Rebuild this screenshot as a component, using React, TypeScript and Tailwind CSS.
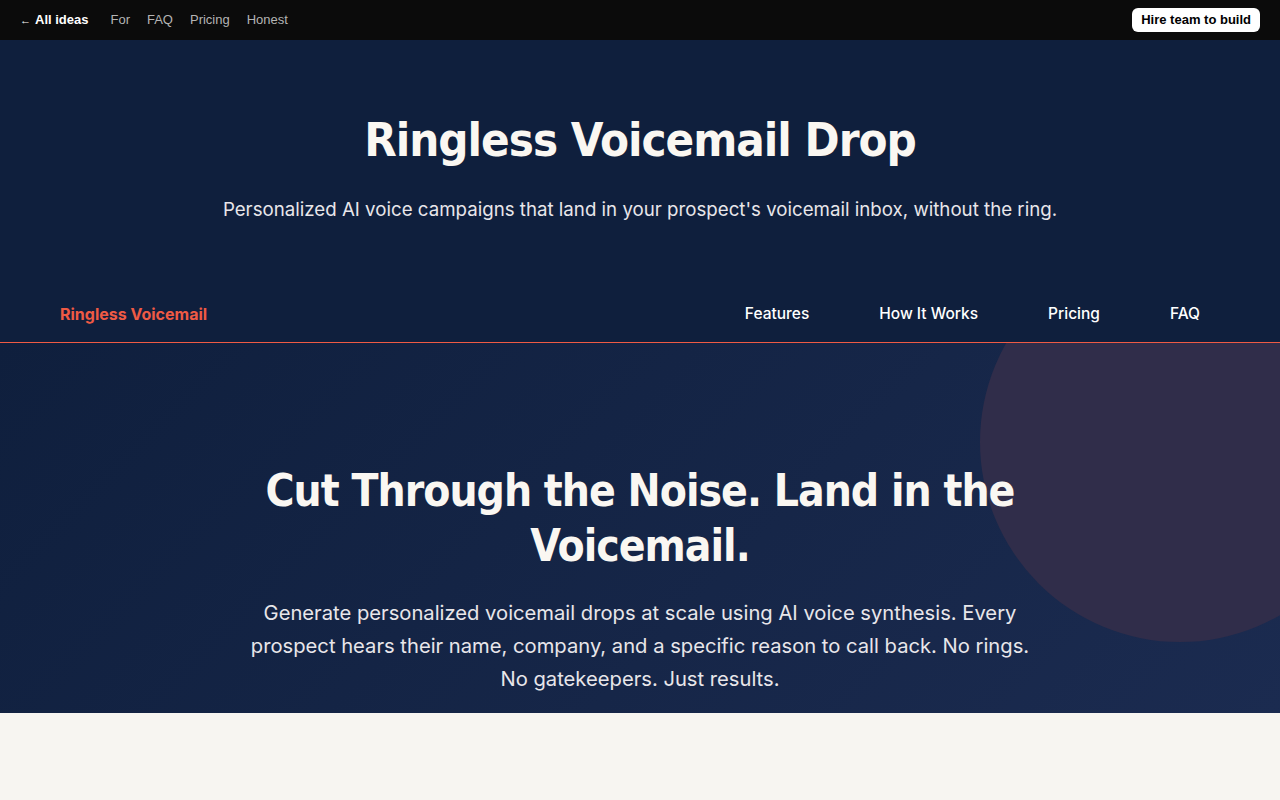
const topLinks = ["For", "FAQ", "Pricing", "Honest"];
const sectionLinks = ["Features", "How It Works", "Pricing", "FAQ"];

const display = "font-['DejaVu_Sans_Condensed','DejaVu_Sans',sans-serif]";
const body = "font-['Inter',sans-serif]";

function TopBar() {
  return (
    <header className="h-10 bg-[#0b0b0b] flex items-center justify-between px-5 font-['Liberation_Sans',Arial,sans-serif] text-[13px]">
      <nav className="flex items-center gap-[17px]">
        <a className="flex items-center gap-1 text-white font-bold mr-[5px]">
          <span className="text-[11px] font-normal">←</span>
          All ideas
        </a>
        {topLinks.map((l) => (
          <a key={l} className="text-[#b4b4b4]">
            {l}
          </a>
        ))}
      </nav>
      <button className="bg-white text-black font-bold text-[13px] rounded-md px-[9px] h-6">
        Hire team to build
      </button>
    </header>
  );
}

function Hero() {
  return (
    <section className="bg-[#0f1f3d] text-[#faf7f2]">
      <div className="pt-[70px] pb-[61px] text-center">
        <h1 className={`${display} text-[47px] font-bold tracking-[-1px] leading-[60px]`}>
          Ringless Voicemail Drop
        </h1>
        <p className={`${body} text-[18.7px] leading-[28px] mt-[26px] text-[#e8e6ea]`}>
          Personalized AI voice campaigns that land in your prospect's voicemail inbox, without the ring.
        </p>
      </div>
      <nav className="flex items-center justify-between px-[60px] h-[58px] border-b border-[#ef5a44]">
        <span className={`${body} text-[#ef5a44] font-bold text-[16px]`}>Ringless Voicemail</span>
        <div className={`${body} flex items-center gap-[70px] pr-5 text-[15.5px] font-medium text-white`}>
          {sectionLinks.map((l) => (
            <a key={l}>{l}</a>
          ))}
        </div>
      </nav>
    </section>
  );
}

function Pitch() {
  return (
    <section className="relative overflow-hidden bg-[linear-gradient(135deg,#0f1f3d_0%,#1b2b50_100%)] h-[370px]">
      {/* decorative blob on the right */}
      <div className="absolute w-[400px] h-[400px] rounded-full bg-[#302d4a] left-[980px] top-[-101px]" />
      <div className="relative pt-[120px] flex flex-col items-center text-center text-[#faf7f2]">
        <h2 className={`${display} text-[44px] font-bold leading-[55px] max-w-[800px] tracking-[-1px]`}>
          Cut Through the Noise. Land in the Voicemail.
        </h2>
        <p className={`${body} text-[20.2px] leading-[33px] max-w-[790px] mt-[23px] text-[#e8e6ea]`}>
          Generate personalized voicemail drops at scale using AI voice synthesis. Every prospect hears
          their name, company, and a specific reason to call back. No rings. No gatekeepers. Just results.
        </p>
      </div>
    </section>
  );
}

export default function App() {
  return (
    <div className="min-h-screen bg-[#f7f5f1]">
      <TopBar />
      <Hero />
      <Pitch />
    </div>
  );
}
